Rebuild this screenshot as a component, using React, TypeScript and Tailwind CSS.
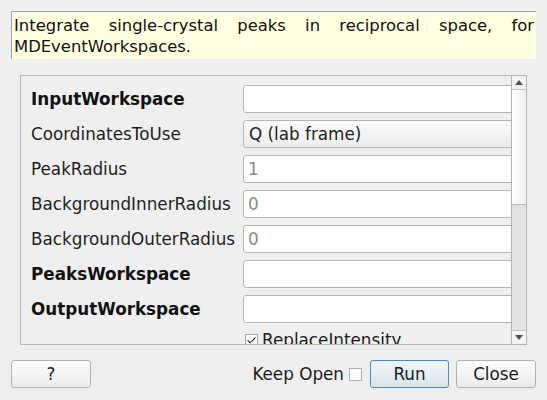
import { Check } from "lucide-react";

type Row =
  | { label: string; bold?: boolean; kind: "text"; value?: string; placeholder?: string }
  | { label: string; bold?: boolean; kind: "combo"; value: string };

const rows: Row[] = [
  { label: "InputWorkspace", bold: true, kind: "text" },
  { label: "CoordinatesToUse", kind: "combo", value: "Q (lab frame)" },
  { label: "PeakRadius", kind: "text", placeholder: "1" },
  { label: "BackgroundInnerRadius", kind: "text", placeholder: "0" },
  { label: "BackgroundOuterRadius", kind: "text", placeholder: "0" },
  { label: "PeaksWorkspace", bold: true, kind: "text" },
  { label: "OutputWorkspace", bold: true, kind: "text" },
];

function PropertyRow({ row }: { row: Row }) {
  return (
    <div className="flex h-[28px] shrink-0 items-center">
      <div
        className={
          "w-[212px] shrink-0 whitespace-nowrap " +
          (row.bold ? "font-bold text-[#111]" : "text-[#1e1e1e]")
        }
      >
        {row.label}
      </div>
      {row.kind === "combo" ? (
        <div className="flex h-[28px] w-[290px] shrink-0 items-center rounded-[3px] border border-[#b4b4b4] bg-gradient-to-b from-[#fbfbfb] to-[#ececec] pl-[5px] text-[#1e1e1e]">
          {row.value}
        </div>
      ) : (
        <div className="flex h-[28px] w-[290px] shrink-0 items-center rounded-[3px] border border-[#b4b4b4] bg-white pl-[4px] text-[#8a8a8a]">
          {row.placeholder ?? ""}
        </div>
      )}
    </div>
  );
}

function ScrollBar() {
  return (
    <div className="flex w-[15px] shrink-0 flex-col border-l border-[#b4b4b4] bg-[#e3e3e3]">
      <div className="flex h-[14px] shrink-0 items-center justify-center border-b border-[#c4c4c4] bg-[#f4f4f4]">
        <svg width="8" height="5" viewBox="0 0 8 5">
          <path d="M0 5 L4 0 L8 5 Z" fill="#505050" />
        </svg>
      </div>
      <div className="h-[115px] shrink-0 border-b border-[#b4b4b4] bg-gradient-to-r from-[#ffffff] to-[#efefef]" />
      <div className="flex-1" />
      <div className="flex h-[14px] shrink-0 items-center justify-center border-t border-[#c4c4c4] bg-[#f4f4f4]">
        <svg width="8" height="5" viewBox="0 0 8 5">
          <path d="M0 0 L8 0 L4 5 Z" fill="#505050" />
        </svg>
      </div>
    </div>
  );
}

export default function App() {
  return (
    <div className="flex h-[400px] w-[547px] flex-col bg-[#efefef] font-['DejaVu_Sans',sans-serif] text-[16.8px] leading-[20px] text-[#1a1a1a]">
      {/* description */}
      <div className="mx-[11px] mt-[11px] h-[48px] shrink-0 border-t border-l border-[#a0a0a0] bg-[#ffffe1] px-[2px] pt-[3px] text-justify text-[16.4px] leading-[21px] text-[#111]">
        Integrate single-crystal peaks in reciprocal space, for MDEventWorkspaces.
      </div>

      {/* property list */}
      <div className="mt-[16px] ml-[20px] flex h-[270px] w-[507px] shrink-0 border border-[#b4b4b4]">
        <div className="flex flex-1 flex-col gap-[7px] overflow-hidden pt-[9px] pl-[10px]">
          {rows.map((r) => (
            <PropertyRow key={r.label} row={r} />
          ))}
          <div className="flex h-[20px] shrink-0 items-center pl-[214px]">
            <span className="mr-[4px] flex h-[13px] w-[13px] items-center justify-center border border-[#a8a8a8] bg-white">
              <Check size={11} strokeWidth={2.5} color="#333" />
            </span>
            <span>ReplaceIntensity</span>
          </div>
        </div>
        <ScrollBar />
      </div>

      {/* buttons */}
      <div className="mt-[15px] flex h-[28px] items-center px-[11px]">
        <button className="h-[28px] w-[80px] rounded-[3px] border border-[#b0b0b0] bg-gradient-to-b from-[#fdfdfd] to-[#ececec] text-[#1a1a1a]">
          ?
        </button>
        <div className="flex-1" />
        <span>Keep Open</span>
        <span className="ml-[5px] h-[13px] w-[13px] border border-[#b0b0b0] bg-white" />
        <button className="ml-[8px] h-[28px] w-[79px] rounded-[3px] border border-[#4f89c4] bg-gradient-to-b from-[#f2f6fa] to-[#dae4ee] text-[#1a1a1a]">
          Run
        </button>
        <button className="ml-[7px] h-[28px] w-[80px] rounded-[3px] border border-[#b0b0b0] bg-gradient-to-b from-[#fdfdfd] to-[#ececec] text-[#1a1a1a]">
          Close
        </button>
      </div>
    </div>
  );
}
